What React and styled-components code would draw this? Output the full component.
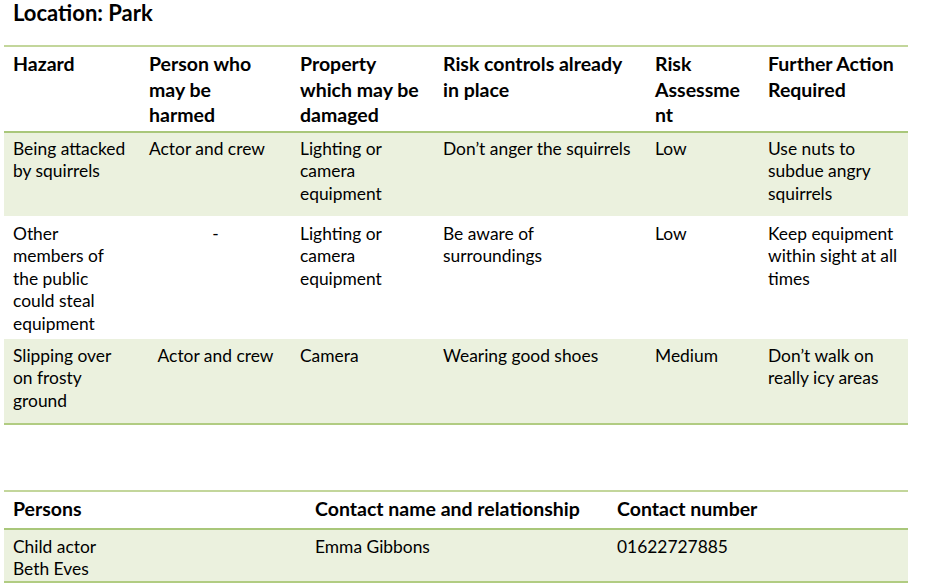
import React from "react";
import styled, { createGlobalStyle } from "styled-components";

const GlobalStyle = createGlobalStyle`
  html, body {
    margin: 0;
    padding: 0;
    background: #ffffff;
  }
  body {
    font-family: Lato, "Open Sans", sans-serif;
    color: #000000;
  }
`;

const hazards = [
  {
    cells: [
      "Being attacked by squirrels",
      "Actor and crew",
      "Lighting or camera equipment",
      "Don\u2019t anger the squirrels",
      "Low",
      "Use nuts to subdue angry squirrels",
    ],
    center: [],
    height: 84,
    top: 5,
    shaded: true,
  },
  {
    cells: [
      "Other members of the public could steal equipment",
      "-",
      "Lighting or camera equipment",
      "Be aware of surroundings",
      "Low",
      "Keep equipment within sight at all times",
    ],
    center: [1],
    height: 123,
    top: 7,
    shaded: false,
  },
  {
    cells: [
      "Slipping over on frosty ground",
      "Actor and crew",
      "Camera",
      "Wearing good shoes",
      "Medium",
      "Don\u2019t walk on really icy areas",
    ],
    center: [1],
    height: 85,
    top: 6,
    shaded: true,
  },
];

// headings broken where the document breaks them
const headings = [
  ["Hazard"],
  ["Person who", "may be", "harmed"],
  ["Property", "which may be", "damaged"],
  ["Risk controls already", "in place"],
  ["Risk", "Assessme", "nt"],
  ["Further Action", "Required"],
];

const widths = [136, 151, 143, 212, 113, 149];

const Page = styled.div`
  width: 926px;
  height: 587px;
  overflow: hidden;
  padding: 0 0 0 4px;
  box-sizing: border-box;
`;

const Title = styled.h1`
  margin: 0;
  padding: 0 0 0 9px;
  height: 45px;
  font-size: 22px;
  line-height: 26px;
  font-weight: 700;
`;

const Table = styled.table`
  width: 904px;
  border-collapse: collapse;
  table-layout: fixed;
  border-top: 2px solid #c3d69b;
  border-bottom: 2px solid #b1cc82;
  margin-bottom: ${(p) => p.$gap || 0}px;
`;

const HeadRow = styled.tr`
  height: ${(p) => p.$h}px;
  border-bottom: 2px solid #a9c77a;
`;

const Th = styled.th`
  text-align: left;
  vertical-align: top;
  padding: 4px 9px 0;
  font-size: 19.5px;
  line-height: 25.5px;
  font-weight: 700;
  white-space: nowrap;
`;

const Row = styled.tr`
  height: ${(p) => p.$h}px;
  background: ${(p) => (p.$shaded ? "#ebf1de" : "#ffffff")};
`;

const Td = styled.td`
  vertical-align: top;
  text-align: ${(p) => (p.$center ? "center" : "left")};
  padding: ${(p) => p.$top ?? 5}px 9px 0;
  font-size: 17.4px;
  line-height: 22.4px;
`;

const Lines = ({ lines }) =>
  lines.map((l, i) => (
    <React.Fragment key={i}>
      {i > 0 && <br />}
      {l}
    </React.Fragment>
  ));

export default function App() {
  return (
    <>
      <GlobalStyle />
      <Page>
        <Title>Location: Park</Title>
        <Table $gap={65}>
          <colgroup>
            {widths.map((w, i) => (
              <col key={i} style={{ width: w }} />
            ))}
          </colgroup>
          <thead>
            <HeadRow $h={86}>
              {headings.map((h, i) => (
                <Th key={i}>
                  <Lines lines={h} />
                </Th>
              ))}
            </HeadRow>
          </thead>
          <tbody>
            {hazards.map((r, i) => (
              <Row key={i} $h={r.height} $shaded={r.shaded}>
                {r.cells.map((c, j) => (
                  <Td key={j} $top={r.top} $center={r.center.includes(j)}>
                    {c}
                  </Td>
                ))}
              </Row>
            ))}
          </tbody>
        </Table>
        <Table>
          <colgroup>
            <col style={{ width: 302 }} />
            <col style={{ width: 302 }} />
            <col style={{ width: 300 }} />
          </colgroup>
          <thead>
            <HeadRow $h={38}>
              <Th>Persons</Th>
              <Th>Contact name and relationship</Th>
              <Th>Contact number</Th>
            </HeadRow>
          </thead>
          <tbody>
            <Row $h={53} $shaded>
              <Td $top={6}>
                <Lines lines={["Child actor", "Beth Eves"]} />
              </Td>
              <Td $top={6}>Emma Gibbons</Td>
              <Td $top={6}>01622727885</Td>
            </Row>
          </tbody>
        </Table>
      </Page>
    </>
  );
}
